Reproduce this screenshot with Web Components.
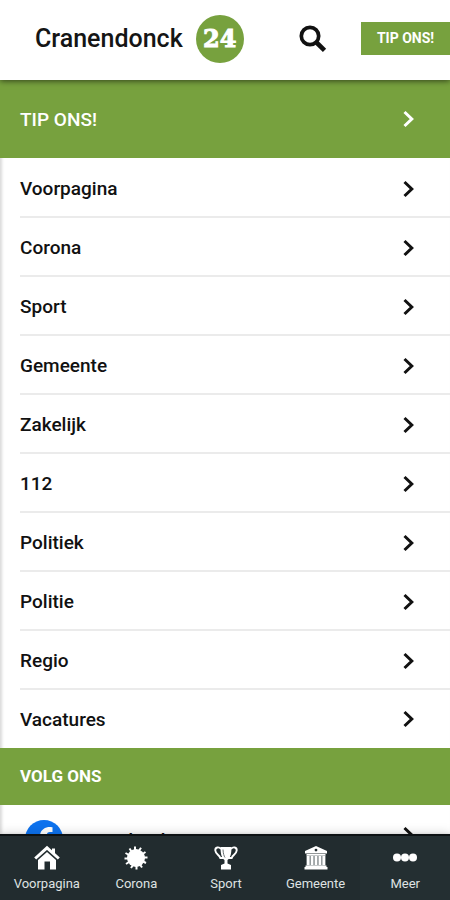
<!DOCTYPE html>
<html lang="nl">
<head>
<meta charset="utf-8">
<meta name="viewport" content="width=device-width, initial-scale=1">
<title>Cranendonck 24</title>
<style>
  body { margin: 0; font-family: Roboto, "Liberation Sans", sans-serif; color: #111; background: #fff; }
</style>
</head>
<body>
<news-app></news-app>
<script>
const define = (name, html) => {
  const template = document.createElement('template');
  template.innerHTML = html;
  customElements.define(name, class extends HTMLElement {
    constructor() {
      super();
      this.attachShadow({ mode: 'open' }).append(template.content.cloneNode(true));
    }
  });
};

define('chevron-icon', `
  <style>
    :host { display: block; width: 12px; height: 18px; }
    svg { display: block; width: 100%; height: 100%; }
  </style>
  <svg viewBox="0 0 12 18" fill="none" stroke="currentColor" stroke-width="3" aria-hidden="true"><path d="M1.5 2 L8.8 9 L1.5 16"/></svg>`);

define('brand-logo', `
  <style>
    :host { display: block; }
    a { display: flex; align-items: center; gap: 13px; color: #151515; text-decoration: none; font-size: 25px; line-height: 32px; font-weight: 500; }
    .mark { display: grid; place-items: center; width: 48px; height: 48px; border-radius: 50%; background: #77a13e; color: #fff; font: 700 24px/48px "DejaVu Serif", serif; -webkit-text-stroke: 1px #fff; }
  </style>
  <a href="#"><span>Cranendonck</span><span class="mark">24</span></a>`);

define('app-header', `
  <style>
    :host { display: flex; align-items: center; flex: none; height: 80px; padding: 0 0 3px 35px; box-sizing: border-box; background: #fff; position: relative; z-index: 1; box-shadow: 0 1px 6px rgba(0,0,0,.6); }
    button { border: 0; padding: 0; font-family: inherit; cursor: pointer; }
    .search { margin-left: auto; background: none; width: 28px; height: 28px; color: #111; }
    svg { display: block; width: 28px; height: 28px; }
    .tip { margin-left: 34px; width: 89px; height: 33px; background: #77a13e; color: #fff; font-size: 14px; line-height: 33px; font-weight: 700; }
  </style>
  <brand-logo></brand-logo>
  <button class="search" aria-label="Zoeken"><svg viewBox="0 0 28 28" fill="none" stroke="currentColor"><circle cx="11" cy="11" r="8.7" stroke-width="3.7"/><path d="M17.5 17.5 L25.5 25.3" stroke-width="4.6"/></svg></button>
  <button class="tip">TIP ONS!</button>`);

define('menu-row', `
  <style>
    :host { display: block; padding-left: 20px; font-size: 19px; font-weight: 500; }
    a { display: flex; align-items: center; height: 59px; padding: 2px 35px 0 0; box-sizing: border-box; border-bottom: 2px solid #ebebeb; color: inherit; text-decoration: none; }
    span { flex: 1; }
    :host([tip]) { background: #77a13e; color: #fff; }
    :host([tip]) a { height: 78px; padding-top: 0; border: 0; }
    :host([last]) a { height: 58px; padding-top: 0; border: 0; }
  </style>
  <a href="#"><span><slot></slot></span><chevron-icon></chevron-icon></a>`);

define('section-title', `
  <style>
    :host { display: block; background: #77a13e; }
    h2 { margin: 0; padding: 0 20px; font-size: 17px; line-height: 57px; font-weight: 700; color: #fff; }
  </style>
  <h2><slot></slot></h2>`);

define('social-row', `
  <style>
    :host { display: block; padding: 0 35px 0 25px; font-size: 19px; font-weight: 500; }
    a { display: flex; align-items: center; gap: 25px; height: 68px; color: inherit; text-decoration: none; }
    svg { width: 38px; height: 38px; }
    span { flex: 1; padding-top: 2px; }
    chevron-icon { padding-bottom: 8px; }
  </style>
  <a href="#"><svg viewBox="0 0 38 38" aria-hidden="true"><circle cx="19" cy="19" r="19" fill="#0d72ee"/><path d="M15 38V21H11v-4h4C14.500 11 19 7 25 7c1.500 0 2.500.3 2.500.3v4.700h-2.600c-2.300 0-3 1.400-3 2.900V19h5.300l-.9 5.500h-4.400V38z" fill="#fff"/></svg><span><slot></slot></span><chevron-icon></chevron-icon></a>`);

define('nav-tab', `
  <style>
    :host { flex: 1; display: block; }
    :host([active]) { background: #242f32; }
    a { display: flex; flex-direction: column; align-items: center; gap: 5px; padding-top: 9px; height: 64px; box-sizing: border-box; color: #dfe2e2; text-decoration: none; font-size: 13px; line-height: 16px; }
    ::slotted(svg) { display: block; width: 26px; height: 26px; color: #fff; }
  </style>
  <a href="#"><slot name="icon"></slot><span><slot></slot></span></a>`);

define('bottom-nav', `
  <style>
    :host { flex: none; position: relative; z-index: 1; display: block; background: #222c2f; border-top: 2px solid #0d1214; box-shadow: 0 -1px 10px rgba(0,0,0,.15); }
    nav { display: flex; padding-left: 2px; }
  </style>
  <nav aria-label="Hoofdnavigatie">
    <nav-tab><svg slot="icon" viewBox="0 0 26 26"><path d="M13 7 22 15V24.500H16V16.500H10.500v8H4V15z" fill="currentColor"/><path d="M1.200 13.500 13 2.800 24.800 13.500M19.500 3.500V8" fill="none" stroke="currentColor" stroke-width="3"/></svg>Voorpagina</nav-tab>
    <nav-tab><svg slot="icon" viewBox="0 0 26 26"><circle cx="13" cy="13" r="9" fill="currentColor"/><path d="M12 1.500v4M6.500 3.500l2 3M2.500 8l3.500 2M1.500 13.500h4M3 19l3-2M8 23l2-3M13.500 24.500v-4M19 22.500l-2-3M23 18l-3-1.500M24.500 12.500h-4M22.500 7l-3 2M18 2.800l-2 3" fill="none" stroke="currentColor" stroke-width="2"/></svg>Corona</nav-tab>
    <nav-tab><svg slot="icon" viewBox="0 0 26 26"><path d="M7.500 2h11c0 7-1.200 11-4 13v3.500l3.500 1.500V24.500H8V20l3.500-1.500V15c-2.800-2-4-6-4-13z" fill="currentColor"/><path d="M8 4C6 1.500 2 2 2.300 5.500c.4 4 4 4.200 5 7.500h4M18 4c2-2.500 6-2 5.700 1.500-.4 4-4 4.200-5 7.500h-4" fill="none" stroke="currentColor" stroke-width="1.900"/><path d="M10 4.500c.2 4 1 6.500 2 8" fill="none" stroke="#6c7476" stroke-width="1"/></svg>Sport</nav-tab>
    <nav-tab><svg slot="icon" viewBox="0 0 26 26" fill="currentColor"><path fill-rule="evenodd" d="M13 1 24 6v2.500H2V6zm0 2.700a1.400 1.400 0 1 0 0 2.800 1.400 1.400 0 0 0 0-2.800z"/><path d="M3.500 10h19v11h-19z" fill="#8b9294"/><path d="M3.500 9h19v1.500h-19zM3.800 11h2.700v9H3.800zM7.900 11h2.400v9H7.900zM11.800 11h2.400v9h-2.400zM15.700 11h2.400v9h-2.400zM19.500 11h2.700v9h-2.700zM2.500 20.500h21V22h-21zM1.500 22h23v2.500h-23z"/></svg>Gemeente</nav-tab>
    <nav-tab active><svg slot="icon" viewBox="0 0 26 26" fill="currentColor"><circle cx="5" cy="12.500" r="4"/><circle cx="13" cy="12.500" r="4"/><circle cx="21" cy="12.500" r="4"/></svg>Meer</nav-tab>
  </nav>`);

define('news-app', `
  <style>
    :host { display: flex; flex-direction: column; height: 100vh; overflow: hidden; }
    main { flex: 1; min-height: 0; overflow: hidden; box-shadow: inset 2px 0 3px rgba(0,0,0,.15); }
    .list { padding-top: 1px; }
  </style>
  <app-header></app-header>
  <main>
    <menu-row tip>TIP ONS!</menu-row>
    <div class="list">
      <menu-row>Voorpagina</menu-row>
      <menu-row>Corona</menu-row>
      <menu-row>Sport</menu-row>
      <menu-row>Gemeente</menu-row>
      <menu-row>Zakelijk</menu-row>
      <menu-row>112</menu-row>
      <menu-row>Politiek</menu-row>
      <menu-row>Politie</menu-row>
      <menu-row>Regio</menu-row>
      <menu-row last>Vacatures</menu-row>
    </div>
    <section-title>VOLG ONS</section-title>
    <social-row>Facebook</social-row>
  </main>
  <bottom-nav></bottom-nav>`);
</script>
</body>
</html>
